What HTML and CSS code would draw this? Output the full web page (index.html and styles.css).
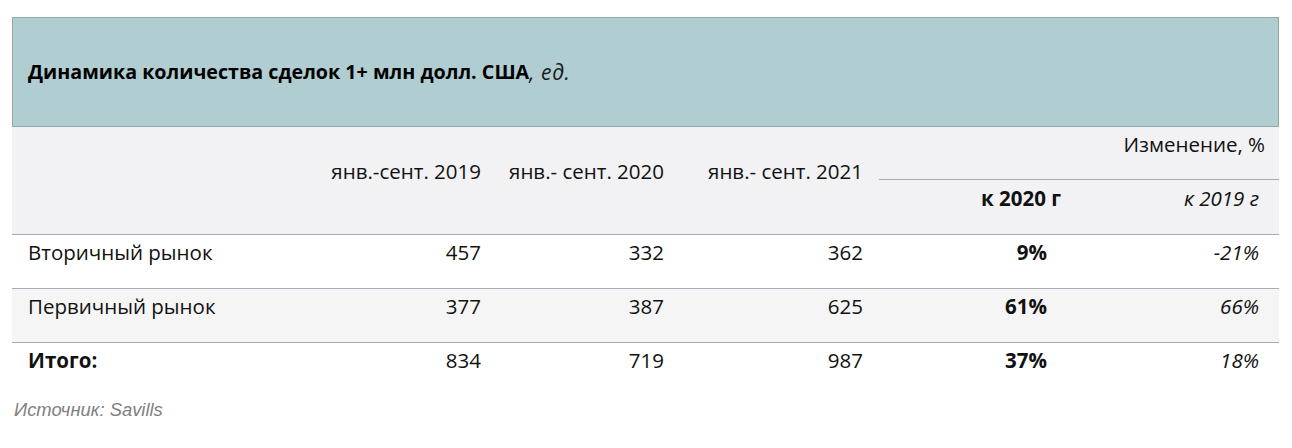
FILE: index.html
```html
<!DOCTYPE html>
<html lang="ru">
<head>
<meta charset="utf-8">
<title>Динамика количества сделок</title>
<link rel="stylesheet" href="styles.css">
</head>
<body>
<div class="wrap">
  <div class="title"><b>Динамика количества сделок 1+ млн долл. США</b><i>, ед.</i></div>
  <div class="table">
    <div class="head">
      <div class="hc c1">янв.-сент. 2019</div>
      <div class="hc c2">янв.- сент. 2020</div>
      <div class="hc c3">янв.- сент. 2021</div>
      <div class="chg">Изменение, %</div>
      <div class="sub s20">к 2020 г</div>
      <div class="sub s19">к 2019 г</div>
    </div>
    <div class="row">
      <div class="lbl">Вторичный рынок</div>
      <div class="num">457</div>
      <div class="num">332</div>
      <div class="num">362</div>
      <div class="num p20">9%</div>
      <div class="num p19">-21%</div>
    </div>
    <div class="row alt">
      <div class="lbl">Первичный рынок</div>
      <div class="num">377</div>
      <div class="num">387</div>
      <div class="num">625</div>
      <div class="num p20">61%</div>
      <div class="num p19">66%</div>
    </div>
    <div class="row last">
      <div class="lbl bold">Итого:</div>
      <div class="num">834</div>
      <div class="num">719</div>
      <div class="num">987</div>
      <div class="num p20">37%</div>
      <div class="num p19">18%</div>
    </div>
  </div>
  <div class="source">Источник: Savills</div>
</div>
</body>
</html>
```
FILE: styles.css
```css
* { box-sizing: border-box; }
body {
  margin: 0;
  background: #ffffff;
  font-family: "Open Sans", Lato, sans-serif;
  color: #111111;
}
.wrap {
  margin: 17px 0 0 12px;
  width: 1267px;
}
.title {
  height: 110px;
  background: #b0cdd1;
  border: 1px solid #98a6a9;
  display: flex;
  align-items: center;
  padding: 0 0 1px 15px;
  font-size: 19.7px;
  color: #000;
}
.title i { font-weight: normal; color: #1a1a1a; font-size: 21px; letter-spacing: 0.6px; }
.table {
  display: flex;
  flex-direction: column;
}
.head {
  display: grid;
  grid-template-columns: 288px 181px 183px 199px 198px 218px;
  grid-template-rows: 53px 54px;
  background: #f2f2f4;
  border-bottom: 1px solid #a5aab0;
  font-size: 20.5px;
  line-height: 24px;
}
.hc {
  grid-row: 1 / 3;
  text-align: right;
  padding-top: 32px;
}
.c1 { grid-column: 2; }
.c2 { grid-column: 3; }
.c3 { grid-column: 4; }
.chg {
  grid-column: 5 / 7;
  grid-row: 1;
  margin-left: 16px;
  border-bottom: 1px solid #a5aab0;
  text-align: right;
  padding: 5px 14px 0 0;
}
.sub {
  grid-row: 2;
  padding-top: 6px;
  text-align: right;
}
.s20 { grid-column: 5; font-weight: bold; }
.s19 { grid-column: 6; font-style: italic; padding-right: 20px; }
.row {
  display: grid;
  grid-template-columns: 288px 181px 183px 199px 198px 218px;
  height: 54px;
  border-bottom: 1px solid #a5aab0;
  font-size: 20.5px;
  background: #ffffff;
}
.row.alt { background: #f5f5f6; }
.row.last { border-bottom: none; }
.row > div { padding-top: 5px; line-height: 24px; }
.lbl { padding-left: 16px; }
.bold { font-weight: bold; }
.num { text-align: right; }
.p20 { font-weight: bold; padding-right: 14px; }
.p19 { font-style: italic; padding-right: 20px; }
.source {
  margin: 2px 0 0 2px;
  font-family: "Liberation Sans", Arial, sans-serif;
  font-style: italic;
  font-size: 18.4px;
  color: #7f7f7f;
}
```
